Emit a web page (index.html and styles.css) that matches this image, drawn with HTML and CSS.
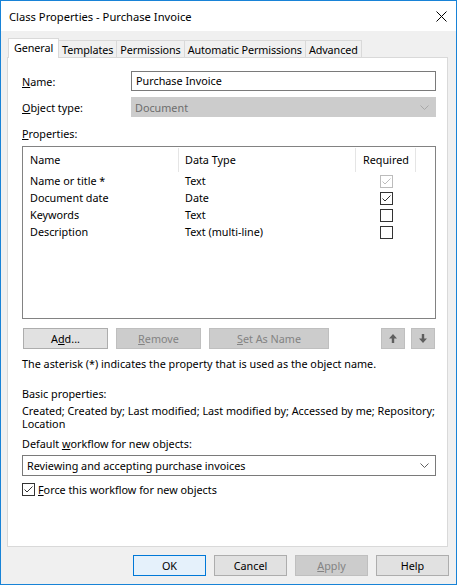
FILE: index.html
```html
<!DOCTYPE html>
<html>
<head>
<meta charset="utf-8">
<title>Class Properties - Purchase Invoice</title>
<link rel="stylesheet" href="styles.css">
</head>
<body>
<div class="window">
  <div class="titlebar">
    <span class="title">Class Properties - Purchase Invoice</span>
    <svg class="close" width="11" height="11" viewBox="0 0 11 11"><path d="M0.5 0.5 L10.5 10.5 M10.5 0.5 L0.5 10.5" stroke="#000" stroke-width="1" fill="none"/></svg>
  </div>
  <div class="client">
    <div class="tabs">
      <div class="tab selected">General</div>
      <div class="tab">Templates</div>
      <div class="tab">Permissions</div>
      <div class="tab">Automatic Permissions</div>
      <div class="tab">Advanced</div>
    </div>
    <div class="panel">
      <div class="fields">
        <span class="lbl"><u>N</u>ame:</span>
        <div class="textbox">Purchase Invoice</div>
        <span class="lbl"><u>O</u>bject type:</span>
        <div class="combo disabled"><span>Document</span><svg width="9" height="5" viewBox="0 0 9 5"><path d="M0.5 0.5 L4.5 4.5 L8.5 0.5" fill="none" stroke="#a8a8a8"/></svg></div>
      </div>
      <div class="props-label"><u>P</u>roperties:</div>
      <div class="listview">
        <div class="lv-head">
          <div class="hc c-name">Name</div>
          <div class="hc c-type">Data Type</div>
          <div class="hc c-req">Required</div>
        </div>
        <div class="lv-row">
          <div class="c-name">Name or title *</div>
          <div class="c-type">Text</div>
          <div class="c-req"><svg class="cb" width="13" height="13" viewBox="0 0 13 13"><rect x="0.5" y="0.5" width="12" height="12" fill="#fff" stroke="#bcbcbc"/><path d="M2.5 6.5 L5 9 L10.5 3.5" fill="none" stroke="#bcbcbc"/></svg></div>
        </div>
        <div class="lv-row">
          <div class="c-name">Document date</div>
          <div class="c-type">Date</div>
          <div class="c-req"><svg class="cb" width="13" height="13" viewBox="0 0 13 13"><rect x="0.5" y="0.5" width="12" height="12" fill="#fff" stroke="#333"/><path d="M2.5 6.5 L5 9 L10.5 3.5" fill="none" stroke="#333"/></svg></div>
        </div>
        <div class="lv-row">
          <div class="c-name">Keywords</div>
          <div class="c-type">Text</div>
          <div class="c-req"><svg class="cb" width="13" height="13" viewBox="0 0 13 13"><rect x="0.5" y="0.5" width="12" height="12" fill="#fff" stroke="#333"/></svg></div>
        </div>
        <div class="lv-row">
          <div class="c-name">Description</div>
          <div class="c-type">Text (multi-line)</div>
          <div class="c-req"><svg class="cb" width="13" height="13" viewBox="0 0 13 13"><rect x="0.5" y="0.5" width="12" height="12" fill="#fff" stroke="#333"/></svg></div>
        </div>
      </div>
      <div class="btn-row">
        <button class="btn w-add">A<u>d</u>d...</button>
        <button class="btn w-add disabled"><u>R</u>emove</button>
        <button class="btn w-set disabled"><u>S</u>et As Name</button>
        <div class="arrows">
          <button class="btn arrow disabled"><svg width="8" height="9" viewBox="0 0 8 9"><path d="M4 0 L8 4.5 H5.2 V9 H2.8 V4.5 H0 Z" fill="#5f5f5f"/></svg></button>
          <button class="btn arrow disabled"><svg width="8" height="9" viewBox="0 0 8 9"><path d="M4 9 L8 4.5 H5.2 V0 H2.8 V4.5 H0 Z" fill="#5f5f5f"/></svg></button>
        </div>
      </div>
      <p class="note">The asterisk (*) indicates the property that is used as the object name.</p>
      <p class="basic-label">Basic properties:</p>
      <p class="basic-list">Created; Created by; Last modified; Last modified by; Accessed by me; Repository; Location</p>
      <p class="wf-label">Default <u>w</u>orkflow for new objects:</p>
      <div class="combo wf"><span>Reviewing and accepting purchase invoices</span><svg width="9" height="5" viewBox="0 0 9 5"><path d="M0.5 0.5 L4.5 4.5 L8.5 0.5" fill="none" stroke="#606060"/></svg></div>
      <div class="check-row">
        <svg class="cb" width="13" height="13" viewBox="0 0 13 13"><rect x="0.5" y="0.5" width="12" height="12" fill="#fff" stroke="#333"/><path d="M2.5 6.5 L5 9 L10.5 3.5" fill="none" stroke="#333"/></svg>
        <span><u>F</u>orce this workflow for new objects</span>
      </div>
    </div>
    <div class="footer">
      <button class="btn foot default">OK</button>
      <button class="btn foot">Cancel</button>
      <button class="btn foot disabled"><u>A</u>pply</button>
      <button class="btn foot">Help</button>
    </div>
  </div>
</div>
</body>
</html>
```
FILE: styles.css
```css
html, body {
  margin: 0;
  padding: 0;
}
body {
  font-family: "Noto Sans", "Segoe UI", sans-serif;
  font-size: 10.8px;
  color: #000;
  background: #fff;
}
u {
  text-decoration: underline;
  text-underline-offset: 1px;
}
.window {
  width: 457px;
  height: 585px;
  box-sizing: border-box;
  border: 1px solid #1883d7;
  background: #f0f0f0;
  display: flex;
  flex-direction: column;
}
.titlebar {
  height: 30px;
  flex: none;
  background: #fff;
  display: flex;
  align-items: center;
  justify-content: space-between;
  padding: 1px 9px 0 8px;
  box-sizing: border-box;
}
.title {
  font-size: 11.2px;
  line-height: 16px;
}
.close {
  display: block;
  margin-top: -1px;
}
.client {
  flex: 1;
  display: flex;
  flex-direction: column;
  padding: 7px 0 0 6px;
}
.tabs {
  display: flex;
  align-items: flex-end;
  height: 20px;
  margin-left: 1px;
  position: relative;
  z-index: 1;
}
.tab {
  height: 17px;
  margin-bottom: 1px;
  box-sizing: border-box;
  border: 1px solid #d9d9d9;
  border-left: none;
  border-bottom: none;
  background: #f0f0f0;
  text-align: center;
  padding: 1px 3px 0;
  line-height: 15px;
  white-space: nowrap;
  letter-spacing: -0.1px;
}
.tab.selected {
  height: 20px;
  margin-bottom: 0;
  border-left: 1px solid #d9d9d9;
  background: #fff;
  padding: 1px 5px 0;
}
.panel {
  margin: -1px 8px 0 0;
  height: 490px;
  box-sizing: border-box;
  border: 1px solid #d9d9d9;
  background: #fff;
  padding: 13px 11px 0 14px;
}
.fields {
  display: grid;
  grid-template-columns: 109px 1fr;
  row-gap: 6px;
  align-items: center;
}
.lbl {
  line-height: 15px;
}
.textbox {
  height: 20px;
  box-sizing: border-box;
  border: 1px solid #7a7a7a;
  padding: 0 4px;
  line-height: 18px;
  background: #fff;
}
.combo {
  box-sizing: border-box;
  display: flex;
  align-items: center;
  justify-content: space-between;
  border: 1px solid #7a7a7a;
  background: #fff;
  padding: 0 6px 0 4px;
}
.combo svg {
  display: block;
}
.combo.disabled {
  height: 20px;
  background: #cccccc;
  border-color: #cccccc;
  color: #6d6d6d;
  padding-left: 3px;
}
.props-label {
  margin-top: 9px;
  line-height: 15px;
  margin-bottom: 5px;
}
.listview {
  height: 173px;
  box-sizing: border-box;
  border: 1px solid #828282;
  background: #fff;
}
.lv-head,
.lv-row {
  display: grid;
  grid-template-columns: 156px 177px 60px;
}
.lv-head {
  padding-top: 1px;
  margin-bottom: 1px;
}
.hc {
  height: 24px;
  line-height: 23px;
  box-sizing: border-box;
  border-right: 1px solid #e5e5e5;
}
.lv-row {
  height: 17px;
  line-height: 16px;
}
.c-name {
  padding-left: 7px;
}
.c-type {
  padding-left: 6px;
}
.hc.c-req {
  padding-left: 7px;
}
.lv-row .c-req {
  display: flex;
  align-items: center;
  justify-content: center;
}
.cb {
  display: block;
  flex: none;
}
.btn-row {
  margin-top: 9px;
  display: flex;
  gap: 8px;
  padding: 0 1px;
}
.btn {
  height: 21px;
  box-sizing: border-box;
  border: 1px solid #adadad;
  background: #e1e1e1;
  font: inherit;
  color: #000;
  padding: 0;
  margin: 0;
  line-height: 19px;
  text-align: center;
}
.btn.disabled {
  background: #cccccc;
  border-color: #bfbfbf;
  color: #838383;
}
.w-add {
  width: 85px;
}
.w-set {
  width: 120px;
}
.arrows {
  margin-left: auto;
  display: flex;
  gap: 6px;
}
.btn.arrow {
  width: 24px;
  display: flex;
  align-items: center;
  justify-content: center;
}
.btn.arrow svg {
  display: block;
}
p {
  margin: 0;
}
.note {
  margin-top: 7px;
  line-height: 15px;
}
.basic-label {
  margin-top: 15px;
  line-height: 15px;
}
.basic-list {
  margin-top: 3px;
  line-height: 13px;
}
.wf-label {
  margin-top: 6px;
  line-height: 15px;
}
.combo.wf {
  margin-top: 4px;
  height: 21px;
  padding-left: 4px;
}
.check-row {
  margin-top: 6px;
  height: 15px;
  display: flex;
  align-items: center;
  gap: 3px;
  line-height: 15px;
}
.footer {
  display: flex;
  justify-content: flex-end;
  gap: 8px;
  padding: 8px 7px 0 0;
}
.btn.foot {
  width: 73px;
}
.btn.default {
  background: #e5f1fb;
  border-color: #0078d7;
}
```
